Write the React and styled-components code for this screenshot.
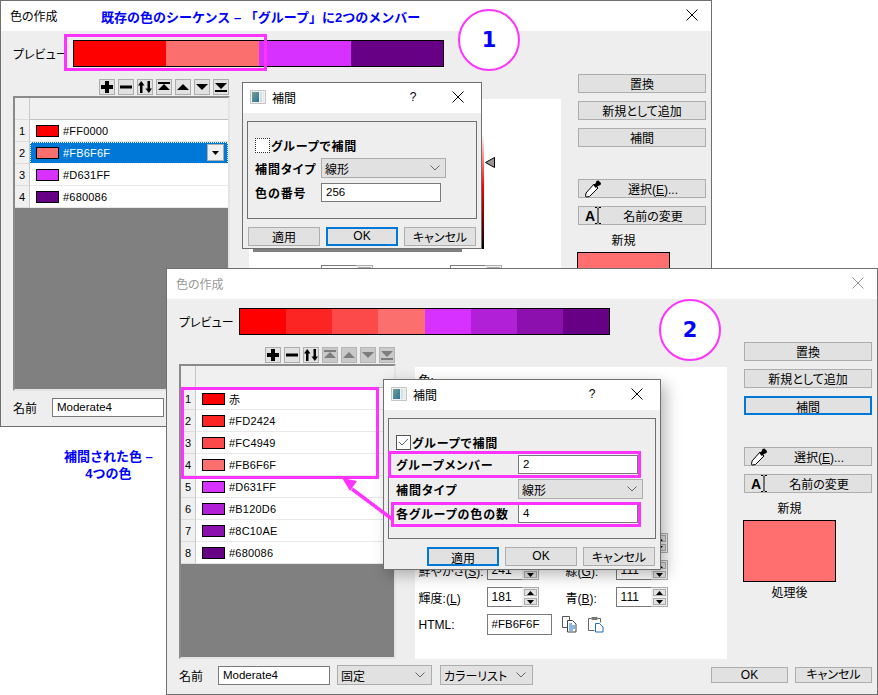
import React from 'react'
import styled, { createGlobalStyle } from 'styled-components'

const MAGENTA = '#ff33ff'
const UI_FONT = '"Liberation Sans", "Noto Sans CJK JP", sans-serif'

const GlobalStyle = createGlobalStyle`
  html, body {
    margin: 0;
    padding: 0;
    background: #fff;
  }
  body {
    font-family: ${UI_FONT};
    font-size: 12px;
    color: #000;
    font-feature-settings: "palt";
  }
`

const Stage = styled.div`
  position: relative;
  width: 878px;
  height: 695px;
  overflow: hidden;
  background: #fff;
`

const Window = styled.section`
  position: absolute;
  left: ${(p) => p.$left}px;
  top: ${(p) => p.$top}px;
  width: 712px;
  height: 427px;
  box-sizing: border-box;
  border: 1px solid #6f6f6f;
  background: #eee;
  display: flex;
  flex-direction: column;
`

const TitleBar = styled.header`
  height: 30px;
  flex: none;
  background: #fff;
  display: flex;
  align-items: center;
  justify-content: space-between;
  padding: 0 13px 2px 9px;
  box-sizing: border-box;
  color: ${(p) => (p.$inactive ? '#999' : '#000')};
`

const Body = styled.div`
  flex: 1;
  display: flex;
  padding-left: 12px;
`

const LeftPane = styled.div`
  width: 548px;
  display: flex;
  flex-direction: column;
`

const PreviewRow = styled.div`
  display: flex;
  align-items: center;
  height: 27px;
  margin-top: 9px;
`

const PreviewLabel = styled.span`
  width: 60px;
`

const PreviewBar = styled.div`
  width: 371px;
  height: 27px;
  box-sizing: border-box;
  border: 1px solid #000;
  display: flex;
`

const PreviewStep = styled.div`
  flex: 1;
  background: ${(p) => p.$color};
`

const EditorRow = styled.div`
  display: flex;
  margin-top: 12px;
`

const ListColumn = styled.div`
  width: 217px;
  display: flex;
  flex-direction: column;
`

const Toolbar = styled.div`
  display: flex;
  justify-content: flex-end;
  gap: 3px;
  padding-right: 1px;
  height: 17px;
`

const ToolButton = styled.button`
  width: 16px;
  height: 16px;
  padding: 0;
  box-sizing: border-box;
  border: 1px solid ${(p) => (p.$dim ? '#b5b5b5' : '#adadad')};
  background: ${(p) => (p.$dim ? '#c9c9c9' : '#e1e1e1')};
  color: ${(p) => (p.$dim ? '#7d7d7d' : '#000')};
  display: flex;
  align-items: center;
  justify-content: center;
`

const ColorList = styled.div`
  height: 295px;
  box-sizing: border-box;
  border: 2px solid #8a8a8a;
  border-right-color: #e4e4e4;
  border-bottom-color: #e4e4e4;
  background: #808080;
`

const ListRow = styled.div`
  display: grid;
  grid-template-columns: 15px 1fr;
  height: 22px;
`

const RowIndex = styled.div`
  background: #f0f0f0;
  border-right: 1px solid #c8c8c8;
  border-bottom: 1px solid #dcdcdc;
  display: flex;
  align-items: center;
  justify-content: center;
  font-size: 11px;
`

const HeadCell = styled.div`
  background: #f0f0f0;
  border-bottom: 1px solid #c0c0c0;
`

const RowCell = styled.div`
  position: relative;
  display: flex;
  align-items: center;
  gap: 4px;
  padding-left: 6px;
  box-sizing: border-box;
  background: ${(p) => (p.$selected ? '#0078d7' : '#fff')};
  color: ${(p) => (p.$selected ? '#fff' : '#000')};
  border-bottom: 1px solid #e8e8e8;
  outline: ${(p) => (p.$selected ? '1px dotted #fff' : 'none')};
  outline-offset: -1px;
  font-size: 11px;
  letter-spacing: 0.2px;
`

const Swatch = styled.span`
  width: 23px;
  height: 12px;
  box-sizing: border-box;
  border: 1px solid #000;
  background: ${(p) => p.$color};
`

const CellDrop = styled.span`
  position: absolute;
  right: 4px;
  top: 2px;
  width: 17px;
  height: 17px;
  box-sizing: border-box;
  background: #f0f0f0;
  border: 1px solid #adadad;
  display: flex;
  align-items: center;
  justify-content: center;
`

const ColorPanel = styled.div`
  width: 313px;
  height: 292px;
  margin: 20px 0 0 19px;
  box-sizing: border-box;
  background: #fff;
  padding: 4px 0 0 4px;
  display: flex;
  flex-direction: column;
`

const PickerRow = styled.div`
  height: 130px;
  margin-top: 2px;
  display: flex;
  align-items: stretch;
`

const PickerSquare = styled.div`
  width: 209px;
  margin-top: 2px;
  background: linear-gradient(to bottom, rgba(128, 128, 128, 0) 60%, #808080 97%),
    linear-gradient(to right, #f00, #ff0, #0f0, #0ff, #00f, #f0f, #f00);
`

const HueStrip = styled.div`
  width: 3px;
  margin: 12px 0 3px 19px;
  background: linear-gradient(to bottom, #fff 0%, #f00 45%, #000 100%);
`

const HueMark = styled.svg`
  margin: 35px 0 0 1px;
`

const ValueGrid = styled.div`
  display: grid;
  grid-template-columns: 68px 79px 50px 52px;
  grid-auto-rows: 20px;
  row-gap: 7px;
  align-items: center;
  margin-top: 13px;
`

const HtmlRow = styled.div`
  display: grid;
  grid-template-columns: 68px 65px 10px 16px 10px 16px;
  align-items: center;
  height: 21px;
  margin-top: 7px;
`

const SpinBox = styled.div`
  display: flex;
  width: 52px;
  height: 20px;
  box-sizing: border-box;
`

const SpinValue = styled.div`
  flex: 1;
  box-sizing: border-box;
  border: 1px solid #7a7a7a;
  border-right: 0;
  background: #fff;
  padding-left: 4px;
  line-height: 18px;
  font-size: 12px;
`

const SpinArrows = styled.div`
  width: 17px;
  box-sizing: border-box;
  border: 1px solid #adadad;
  border-left: 0;
  background: #f0f0f0;
  display: flex;
  flex-direction: column;
  justify-content: space-between;
  padding: 1px 1px 1px 2px;
`

const SpinButton = styled.span`
  height: 7px;
  box-sizing: border-box;
  background: #e1e1e1;
  border: 1px solid #adadad;
  display: flex;
  align-items: center;
  justify-content: center;
`

const TextField = styled.div`
  box-sizing: border-box;
  height: ${(p) => p.$h || 19}px;
  width: ${(p) => p.$w}px;
  border: 1px solid #7a7a7a;
  background: #fff;
  padding-left: 4px;
  line-height: ${(p) => (p.$h || 19) - 3}px;
  font-size: 11.5px;
  font-weight: normal;
  letter-spacing: 0;
`

const RightPane = styled.div`
  width: 128px;
  margin-left: 17px;
  padding-top: 43px;
  display: flex;
  flex-direction: column;
`

const ActionButton = styled.button`
  position: relative;
  width: 128px;
  height: 19px;
  margin-bottom: ${(p) => p.$after ?? 8}px;
  padding: 0 0 2px ${(p) => p.$indent || 0}px;
  box-sizing: border-box;
  border: ${(p) => (p.$active ? '2px solid #0078d7' : '1px solid #adadad')};
  background: #e1e1e1;
  font: inherit;
  color: #000;
`

const ButtonIcon = styled.span`
  position: absolute;
  left: ${(p) => p.$x}px;
  top: 0;
  height: 17px;
  display: flex;
  align-items: center;
`

const BoldA = styled.span`
  font: bold 14px "Liberation Sans", sans-serif;
`

const CaptionLabel = styled.div`
  width: 93px;
  text-align: center;
  margin-left: -1px;
  height: 16px;
  line-height: 16px;
`

const NewColor = styled.div`
  width: 93px;
  height: 62px;
  margin: 3px 0 3px -1px;
  box-sizing: border-box;
  border: 1px solid #000;
  background: #ff6f6f;
`

const Footer = styled.footer`
  height: 20px;
  margin: 5px 0 9px;
  padding: 0 5px 0 12px;
  display: flex;
  align-items: center;
`

const FooterLabel = styled.span`
  width: 39px;
`

const Combo = styled.div`
  width: ${(p) => p.$w}px;
  height: ${(p) => p.$h || 20}px;
  box-sizing: border-box;
  margin-left: ${(p) => p.$gap || 0}px;
  border: 1px solid #adadad;
  background: #e1e1e1;
  padding: 0 6px 0 3px;
  display: flex;
  align-items: center;
  justify-content: space-between;
`

const FooterButton = styled.button`
  width: 77px;
  height: 16px;
  padding: 0;
  margin-left: ${(p) => p.$gap}px;
  box-sizing: border-box;
  border: 1px solid #adadad;
  background: #e1e1e1;
  font: inherit;
  line-height: 13px;
  color: #000;
`

const DialogBox = styled.div`
  position: absolute;
  left: ${(p) => p.$left}px;
  top: ${(p) => p.$top}px;
  width: ${(p) => p.$w}px;
  height: ${(p) => p.$h}px;
  box-sizing: border-box;
  border: 1px solid #6f6f6f;
  background: #eee;
  box-shadow: ${(p) => (p.$shadow ? '5px 5px 14px rgba(0, 0, 0, 0.28)' : 'none')};
  display: flex;
  flex-direction: column;
  padding: 0 4px;
`

const DialogTitle = styled.div`
  height: 30px;
  flex: none;
  box-sizing: border-box;
  margin: 0 -4px;
  padding: 0 17px 2px 7px;
  background: #fff;
  display: flex;
  align-items: center;
  gap: 6px;
`

const DialogName = styled.span`
  flex: 1;
`

const HelpMark = styled.span`
  width: 12px;
  margin-right: ${(p) => p.$gap}px;
  text-align: center;
`

const GroupBox = styled.div`
  height: ${(p) => p.$h}px;
  margin-top: 8px;
  box-sizing: border-box;
  border: 1px solid #6f6f6f;
  padding: ${(p) => p.$pad}px 0 0 7px;
  display: flex;
  flex-direction: column;
  gap: 5px;
`

const CheckRow = styled.label`
  display: flex;
  align-items: center;
  height: 15px;
  font-weight: bold;
  letter-spacing: 0.9px;
`

const CheckMark = styled.span`
  width: 15px;
  height: 15px;
  box-sizing: border-box;
  border: 1px ${(p) => (p.$on ? 'solid #555' : 'dotted #333')};
  background: #fff;
  display: flex;
  align-items: center;
  justify-content: center;
  margin-right: 1px;
`

const FieldRow = styled.div`
  display: grid;
  grid-template-columns: ${(p) => p.$label}px 1fr;
  align-items: center;
  font-weight: bold;
  letter-spacing: 0.9px;
`

const DialogButtons = styled.div`
  display: flex;
  justify-content: flex-end;
  gap: 6px;
  margin-top: 8px;
  padding-right: 1px;
`

const DialogButton = styled.button`
  width: 72px;
  height: 19px;
  padding: 0 0 2px;
  box-sizing: border-box;
  border: ${(p) => (p.$active ? '2px solid #0078d7' : '1px solid #adadad')};
  background: #e1e1e1;
  font: inherit;
  color: #000;
`

const FlatSelect = styled(Combo)`
  font-weight: normal;
  letter-spacing: 0;
  width: 125px;
  padding: 0 5px 0 3px;
`

const Annotation = styled.div`
  position: absolute;
  left: ${(p) => p.$x}px;
  top: ${(p) => p.$y}px;
  color: #0000ff;
  font: bold 13px ${UI_FONT};
  line-height: 17px;
  white-space: nowrap;
  text-align: center;
  font-feature-settings: normal;
`

const Highlight = styled.div`
  position: absolute;
  left: ${(p) => p.$x}px;
  top: ${(p) => p.$y}px;
  width: ${(p) => p.$w}px;
  height: ${(p) => p.$h}px;
  box-sizing: border-box;
  border: 3px solid ${MAGENTA};
`

const StepBadge = styled.div`
  position: absolute;
  left: ${(p) => p.$x}px;
  top: ${(p) => p.$y}px;
  width: 62px;
  height: 62px;
  box-sizing: border-box;
  border: 2px solid ${MAGENTA};
  border-radius: 50%;
  background: #fff;
  color: #0000ff;
  display: flex;
  align-items: center;
  justify-content: center;
  font: bold 21px "DejaVu Sans", sans-serif;
`

const ArrowLayer = styled.svg`
  position: absolute;
  left: 336px;
  top: 472px;
`

const Close = ({ color = '#000' }) => (
  <svg width="12" height="12" viewBox="0 0 12 12">
    <path d="M.5.5l11 11M11.5.5l-11 11" stroke={color} fill="none" />
  </svg>
)

const Chevron = () => (
  <svg width="10" height="6" viewBox="0 0 10 6">
    <path d="M.5.5L5 5 9.5.5" stroke="#666" fill="none" />
  </svg>
)

const MiniTriangle = ({ down }) => (
  <svg width="7" height="4" viewBox="0 0 7 4">
    <path d={down ? 'M0 0h7L3.5 4z' : 'M0 4h7L3.5 0z'} fill="#000" />
  </svg>
)

const TOOL_ICONS = [
  'M5 1h4v4h4v4H9v4H5V9H1V5h4z',
  'M1 5.5h12v3H1z',
  'M3.2 1l3.3 4.5h-2V13H2V5.5H0zM10.8 13L7.5 8.5h2V1H12v7.5h2z',
  'M1 2h12v2H1zM7 4l6 6H1z',
  'M7 4l6 6H1z',
  'M1 4h12l-6 6z',
  'M1 3h12l-6 6zM1 10h12v2H1z',
]

function ToolIcons({ dimFrom }) {
  return (
    <Toolbar>
      {TOOL_ICONS.map((d, i) => (
        <ToolButton key={d} $dim={i >= dimFrom}>
          <svg width="14" height="14" viewBox="0 0 14 14">
            <path d={d} fill="currentColor" />
          </svg>
        </ToolButton>
      ))}
    </Toolbar>
  )
}

function ListOfColors({ colors, selected }) {
  return (
    <ColorList>
      <ListRow>
        <RowIndex />
        <HeadCell />
      </ListRow>
      {colors.map((item, i) => (
        <ListRow key={item.color}>
          <RowIndex>{i + 1}</RowIndex>
          <RowCell $selected={i === selected}>
            <Swatch $color={item.color} />
            {item.name || item.color}
            {i === selected && (
              <CellDrop>
                <MiniTriangle down />
              </CellDrop>
            )}
          </RowCell>
        </ListRow>
      ))}
    </ColorList>
  )
}

function Spin({ value }) {
  return (
    <SpinBox>
      <SpinValue>{value}</SpinValue>
      <SpinArrows>
        <SpinButton>
          <MiniTriangle />
        </SpinButton>
        <SpinButton>
          <MiniTriangle down />
        </SpinButton>
      </SpinArrows>
    </SpinBox>
  )
}

function CopyIcon() {
  return (
    <svg width="16" height="17" viewBox="0 0 16 17">
      <path d="M.5.5h7v11h-7z" fill="#fff" stroke="#555" />
      <path d="M5.5 4.5h5l3.5 3.5v8H5.5z" fill="#fff" stroke="#444" />
      <path d="M7 8h3M7 10h6M7 12h6M7 14h4" stroke="#1b6fc8" />
    </svg>
  )
}

function PasteIcon() {
  return (
    <svg width="16" height="17" viewBox="0 0 16 17">
      <path d="M3.5 2.5h-3v12h6M9.5 2.5h3v4" fill="none" stroke="#666" />
      <path d="M3.5 1h6v3h-6z" fill="#777" />
      <path d="M7.5 7.5h4l3.5 3.5v5H7.5z" fill="#fff" stroke="#1b6fc8" />
    </svg>
  )
}

function Dropper() {
  return (
    <svg width="18" height="18" viewBox="0 0 18 18">
      <path d="M10 4l4 4-8.5 8.5L2 17l-.5-.5.5-3.5z" fill="#fff" stroke="#000" />
      <path d="M9.5 5.5l2-2 1-2.5 2-.5 2.5 2.5-.5 2-2.5 1-2 2z" fill="#000" />
    </svg>
  )
}

function ColorWindow({ left, top, inactive, colors, selected, dimFrom, active, dialog }) {
  return (
    <Window $left={left} $top={top}>
      <TitleBar $inactive={inactive}>
        色の作成
        <Close color={inactive ? '#999' : '#000'} />
      </TitleBar>
      <Body>
        <LeftPane>
          <PreviewRow>
            <PreviewLabel>プレビュー</PreviewLabel>
            <PreviewBar>
              {colors.map((item) => (
                <PreviewStep key={item.color} $color={item.color} />
              ))}
            </PreviewBar>
          </PreviewRow>
          <EditorRow>
            <ListColumn>
              <ToolIcons dimFrom={dimFrom} />
              <ListOfColors colors={colors} selected={selected} />
            </ListColumn>
            <ColorPanel>
              色:
              <PickerRow>
                <PickerSquare />
                <HueStrip />
                <HueMark width="10" height="11" viewBox="0 0 10 11">
                  <path d="M9.5.5v10L.5 5.5z" fill="#999" stroke="#000" />
                </HueMark>
              </PickerRow>
              <ValueGrid>
                <span>色合い(<u>E</u>):</span>
                <Spin value="0" />
                <span>赤(<u>R</u>):</span>
                <Spin value="251" />
                <span>鮮やかさ(<u>S</u>):</span>
                <Spin value="241" />
                <span>緑(<u>G</u>):</span>
                <Spin value="111" />
                <span>輝度:(<u>L</u>)</span>
                <Spin value="181" />
                <span>青(<u>B</u>):</span>
                <Spin value="111" />
              </ValueGrid>
              <HtmlRow>
                <span>HTML:</span>
                <TextField $w={65} $h={21}>#FB6F6F</TextField>
                <span />
                <CopyIcon />
                <span />
                <PasteIcon />
              </HtmlRow>
            </ColorPanel>
          </EditorRow>
        </LeftPane>
        <RightPane>
          <ActionButton>置換</ActionButton>
          <ActionButton>新規として追加</ActionButton>
          <ActionButton $active={active} $after={32}>補間</ActionButton>
          <ActionButton $indent={22}>
            <ButtonIcon $x={5}><Dropper /></ButtonIcon>
            選択(<u>E</u>)...
          </ActionButton>
          <ActionButton $indent={22} $after={8}>
            <ButtonIcon $x={6}>
              <BoldA>A</BoldA>
              <svg width="6" height="17" viewBox="0 0 6 17">
                <path d="M0 .5h2l1 1 1-1h2M3 1.5v14M0 16.5h2l1-1 1 1h2" stroke="#000" fill="none" />
              </svg>
            </ButtonIcon>
            名前の変更
          </ActionButton>
          <CaptionLabel>新規</CaptionLabel>
          <NewColor />
          <CaptionLabel>処理後</CaptionLabel>
        </RightPane>
      </Body>
      <Footer>
        <FooterLabel>名前</FooterLabel>
        <TextField $w={112}>Moderate4</TextField>
        <Combo $w={95} $gap={7}>固定<Chevron /></Combo>
        <Combo $w={93} $gap={8}>カラーリスト<Chevron /></Combo>
        <FooterButton $gap={178}>OK</FooterButton>
        <FooterButton $gap={7}>キャンセル</FooterButton>
      </Footer>
      {dialog}
    </Window>
  )
}

function AppGlyph() {
  return (
    <svg width="16" height="14" viewBox="0 0 16 14">
      <defs>
        <linearGradient id="glyph" x1="0" y1="0" x2="1" y2="1">
          <stop offset="0" stopColor="#6fa58f" />
          <stop offset="1" stopColor="#2f6f9f" />
        </linearGradient>
      </defs>
      <path d="M.5.5h15v13H.5z" fill="#f2f2f2" stroke="#c4c4c4" />
      <path d="M2 2h7v10H2z" fill="url(#glyph)" />
      <path d="M10 2h2v10h-2z" fill="#cfe0e6" />
      <path d="M13 2h1v10h-1z" fill="#e4e4e4" />
    </svg>
  )
}

function InterpolationDialog({ left, top, w, h, boxH, boxPad, labelW, shadow, helpGap, firstActive, children, checked }) {
  return (
    <DialogBox $left={left} $top={top} $w={w} $h={h} $shadow={shadow}>
      <DialogTitle>
        <AppGlyph />
        <DialogName>補間</DialogName>
        <HelpMark $gap={helpGap}>?</HelpMark>
        <Close />
      </DialogTitle>
      <GroupBox $h={boxH} $pad={boxPad}>
        <CheckRow>
          <CheckMark $on={checked}>
            {checked && (
              <svg width="11" height="9" viewBox="0 0 11 9">
                <path d="M1 4l3 3 6-6" stroke="#666" fill="none" />
              </svg>
            )}
          </CheckMark>
          グループで補間
        </CheckRow>
        {React.Children.map(children, (row) => (
          <FieldRow $label={labelW}>{row.props.children}</FieldRow>
        ))}
      </GroupBox>
      <DialogButtons>
        <DialogButton $active={firstActive}>適用</DialogButton>
        <DialogButton $active={!firstActive}>OK</DialogButton>
        <DialogButton>キャンセル</DialogButton>
      </DialogButtons>
    </DialogBox>
  )
}

const firstColors = [
  { color: '#FF0000' },
  { color: '#FB6F6F' },
  { color: '#D631FF' },
  { color: '#680086' },
]

const secondColors = [
  { color: '#FF0000', name: '赤' },
  { color: '#FD2424' },
  { color: '#FC4949' },
  { color: '#FB6F6F' },
  { color: '#D631FF' },
  { color: '#B120D6' },
  { color: '#8C10AE' },
  { color: '#680086' },
]

export default function App() {
  return (
    <Stage>
      <GlobalStyle />
      <ColorWindow
        left={0}
        top={0}
        colors={firstColors}
        selected={1}
        dimFrom={99}
        dialog={
          <InterpolationDialog
            left={241}
            top={81}
            w={240}
            h={167}
            boxH={98}
            boxPad={16}
            labelW={66}
            helpGap={27}
          >
            <div>
              補間タイプ
              <FlatSelect>線形<Chevron /></FlatSelect>
            </div>
            <div>
              色の番号
              <TextField $w={120}>256</TextField>
            </div>
          </InterpolationDialog>
        }
      />
      <Annotation $x={101} $y={9}>既存の色のシーケンス – 「グループ」に2つのメンバー</Annotation>
      <Highlight $x={64} $y={34} $w={203} $h={37} />
      <StepBadge $x={458} $y={9}>1</StepBadge>
      <Annotation $x={64} $y={448}>
        補間された色 –<br />4つの色
      </Annotation>
      <ColorWindow
        left={166}
        top={268}
        inactive
        active
        colors={secondColors}
        dimFrom={3}
        dialog={
          <InterpolationDialog
            left={216}
            top={110}
            w={278}
            h={191}
            boxH={121}
            boxPad={16}
            labelW={122}
            helpGap={27}
            shadow
            firstActive
            checked
          >
            <div>
              グループメンバー
              <TextField $w={120}>2</TextField>
            </div>
            <div>
              補間タイプ
              <FlatSelect>線形<Chevron /></FlatSelect>
            </div>
            <div>
              各グループの色の数
              <TextField $w={120}>4</TextField>
            </div>
          </InterpolationDialog>
        }
      />
      <Highlight $x={181} $y={387} $w={198} $h={92} />
      <Highlight $x={388} $y={451} $w={253} $h={27} />
      <Highlight $x={391} $y={502} $w={250} $h={25} />
      <ArrowLayer width="60" height="52" viewBox="0 0 60 52">
        <path d="M16 17L56 47" stroke={MAGENTA} strokeWidth="3.5" fill="none" />
        <path d="M6 6l15 3-7 10z" fill={MAGENTA} />
      </ArrowLayer>
      <StepBadge $x={659} $y={299}>2</StepBadge>
    </Stage>
  )
}
